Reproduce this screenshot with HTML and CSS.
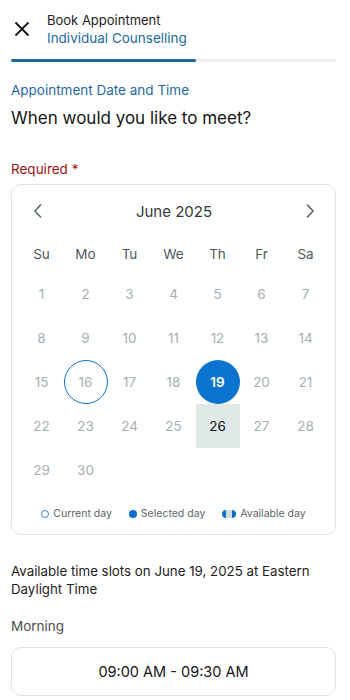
FILE: index.html
```html
<!DOCTYPE html>
<html lang="en">
<head>
  <meta charset="UTF-8">
  <meta name="viewport" content="width=device-width, initial-scale=1.0">
  <title>Book Appointment</title>
  <link rel="stylesheet" href="styles.css">
</head>
<body>
  <header class="topbar">
    <button class="close-btn" aria-label="Close">
      <svg width="16" height="16" viewBox="0 0 16 16"><path d="M1.5 1.5L14.5 14.5M14.5 1.5L1.5 14.5" stroke="#111" stroke-width="1.8" fill="none"/></svg>
    </button>
    <div class="titles">
      <div class="title">Book Appointment</div>
      <div class="subtitle">Individual Counselling</div>
    </div>
  </header>
  <div class="progress"><div class="progress-fill"></div></div>

  <main class="content">
    <p class="step-label">Appointment Date and Time</p>
    <h1 class="question">When would you like to meet?</h1>

    <p class="required">Required *</p>

    <div class="calendar">
      <div class="cal-head">
        <button class="nav-btn" aria-label="Previous month">
          <svg width="10" height="16" viewBox="0 0 10 16"><path d="M8 1.5L2 8l6 6.5" stroke="#5d6868" stroke-width="1.6" fill="none"/></svg>
        </button>
        <span class="month">June 2025</span>
        <button class="nav-btn" aria-label="Next month">
          <svg width="10" height="16" viewBox="0 0 10 16"><path d="M2 1.5L8 8l-6 6.5" stroke="#5d6868" stroke-width="1.6" fill="none"/></svg>
        </button>
      </div>

      <div class="cal-grid weekdays">
        <span>Su</span><span>Mo</span><span>Tu</span><span>We</span><span>Th</span><span>Fr</span><span>Sa</span>
      </div>

      <div class="cal-grid days">
        <span class="day">1</span><span class="day">2</span><span class="day">3</span><span class="day">4</span><span class="day">5</span><span class="day">6</span><span class="day">7</span>
        <span class="day">8</span><span class="day">9</span><span class="day">10</span><span class="day">11</span><span class="day">12</span><span class="day">13</span><span class="day">14</span>
        <span class="day">15</span><span class="day today">16</span><span class="day">17</span><span class="day">18</span><span class="day selected">19</span><span class="day">20</span><span class="day">21</span>
        <span class="day">22</span><span class="day">23</span><span class="day">24</span><span class="day">25</span><span class="day available">26</span><span class="day">27</span><span class="day">28</span>
        <span class="day">29</span><span class="day">30</span>
      </div>

      <div class="legend">
        <span class="legend-item"><i class="mark mark-current"></i>Current day</span>
        <span class="legend-item"><i class="mark mark-selected"></i>Selected day</span>
        <span class="legend-item"><i class="mark mark-available"></i>Available day</span>
      </div>
    </div>

    <p class="slots-info">Available time slots on June 19, 2025 at Eastern Daylight Time</p>

    <p class="period">Morning</p>
    <button class="slot">09:00 AM - 09:30 AM</button>
  </main>
</body>
</html>
```

FILE: styles.css
```css
body {
  font-family: 'Inter', 'Noto Sans', sans-serif;
  margin: 0;
  padding: 0;
  background: #ffffff;
  color: #1b1b1b;
}

button {
  font-family: inherit;
  background: none;
  border: none;
  padding: 0;
  cursor: pointer;
}

p, h1 {
  margin: 0;
}

.topbar {
  display: flex;
  align-items: center;
  height: 56px;
  padding: 0 0 0 14px;
}

.close-btn {
  width: 16px;
  height: 16px;
  display: flex;
  margin-top: 2px;
}

.titles {
  margin-left: 17px;
  margin-top: 2px;
}

.title {
  font-size: 13px;
  line-height: 18px;
  color: #1c1c1c;
}

.subtitle {
  font-size: 13.5px;
  line-height: 19px;
  color: #1d6aa3;
}

.progress {
  margin: 3px 14px 0 11px;
  height: 3px;
  background: #eef0f2;
  border-radius: 2px;
}

.progress-fill {
  width: 185px;
  height: 3px;
  background: #1a6aa0;
  border-radius: 2px;
}

.content {
  padding: 19px 14px 0 11px;
}

.step-label {
  font-size: 13.5px;
  line-height: 18px;
  color: #1d6aa3;
}

.question {
  font-size: 17px;
  font-weight: 400;
  line-height: 22px;
  margin-top: 8px;
  color: #151515;
}

.required {
  margin-top: 31px;
  font-size: 13.5px;
  line-height: 18px;
  color: #a30f12;
}

.calendar {
  margin-top: 6px;
  border: 1px solid #dde4e4;
  border-radius: 10px;
  padding: 6px 0 14px;
}

.cal-head {
  display: flex;
  align-items: center;
  justify-content: space-between;
  height: 40px;
  padding: 0 20px 0 21px;
}

.nav-btn {
  display: flex;
  width: 10px;
  height: 16px;
}

.month {
  font-size: 15px;
  color: #333a3a;
}

.cal-grid {
  display: grid;
  grid-template-columns: repeat(7, 44px);
  justify-content: center;
  text-align: center;
}

.weekdays {
  margin-top: 5px;
  height: 36px;
  align-items: center;
  font-size: 13.5px;
  color: #4e5959;
}

.day {
  height: 44px;
  display: flex;
  align-items: center;
  justify-content: center;
  font-size: 13.5px;
  color: #a5b0b0;
  box-sizing: border-box;
}

.day.today {
  border: 1.5px solid #1170cc;
  border-radius: 50%;
}

.day.selected {
  background: #0b74d0;
  color: #ffffff;
  font-weight: 600;
  border-radius: 50%;
}

.day.available {
  background: #e0e8e8;
  color: #111;
}

.legend {
  display: flex;
  justify-content: center;
  gap: 17px;
  margin-top: 15px;
  font-size: 10.5px;
  color: #5d6666;
}

.legend-item {
  display: flex;
  align-items: center;
  gap: 4px;
}

.mark {
  display: inline-block;
  box-sizing: border-box;
}

.mark-current {
  width: 8px;
  height: 8px;
  border: 1.2px solid #3b7fd6;
  border-radius: 50%;
}

.mark-selected {
  width: 8px;
  height: 8px;
  background: #0b6fd0;
  border-radius: 50%;
}

.mark-available {
  width: 14px;
  height: 8px;
  border-radius: 4px;
  background: linear-gradient(to right, #0b6fd0 0 4px, #d2dada 4px 10px, #0b6fd0 10px);
}

.slots-info {
  margin-top: 27px;
  font-size: 13.3px;
  line-height: 18px;
  color: #1c1c1c;
}

.period {
  margin-top: 19px;
  font-size: 13.5px;
  line-height: 18px;
  color: #4a4f4f;
}

.slot {
  margin-top: 12px;
  width: 100%;
  height: 49px;
  border: 1.5px solid #dde4e4;
  border-radius: 10px;
  font-size: 14.5px;
  color: #151515;
  background: #fff;
}
```
